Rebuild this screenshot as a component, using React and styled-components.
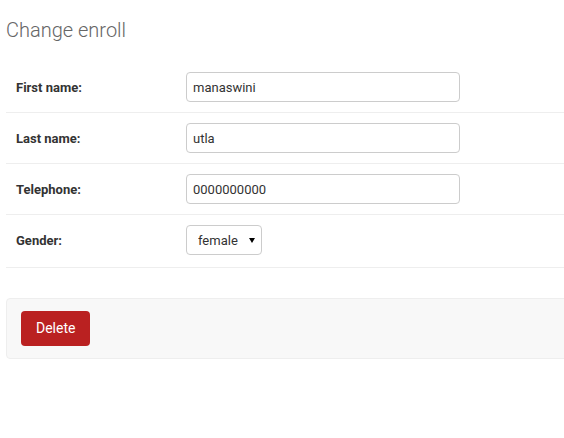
import styled, { createGlobalStyle } from 'styled-components';

const GlobalStyle = createGlobalStyle`
  html, body {
    margin: 0;
    padding: 0;
    background: #fff;
    overflow: hidden;
  }
  body {
    font-family: Roboto, "Liberation Sans", sans-serif;
    color: #333;
  }
`

const Content = styled.div`
  width: 640px;
  padding: 18px 0 0 6px;
`

const Title = styled.h1`
  margin: 0 0 20px;
  font-size: 20px;
  line-height: 24px;
  font-weight: 300;
  color: #666;
`

const FormRow = styled.div`
  display: flex;
  align-items: center;
  padding: ${props => props.$last ? '10px 10px 12px' : '10px'};
  border-bottom: 1px solid #eee;
  font-size: 13px;
`

const Label = styled.label`
  width: 160px;
  padding-right: 10px;
  font-weight: 700;
  font-size: 13px;
  color: #333;
`

const TextInput = styled.input`
  box-sizing: border-box;
  width: 274px;
  height: 30px;
  padding: 5px 6px;
  border: 1px solid #ccc;
  border-radius: 4px;
  font-family: Roboto, "Liberation Sans", sans-serif;
  font-size: 13px;
  color: #333;
  outline: none;
`

const SelectWrap = styled.div`
  position: relative;
  display: inline-block;

  /* native-looking dropdown arrow */
  &::after {
    content: '';
    position: absolute;
    left: 63px;
    top: 13px;
    border-left: 3px solid transparent;
    border-right: 3px solid transparent;
    border-top: 5px solid #000;
    pointer-events: none;
  }
`

const Select = styled.select`
  box-sizing: border-box;
  appearance: none;
  width: 76px;
  height: 30px;
  padding: 0 20px 0 11px;
  border: 1px solid #ccc;
  border-radius: 4px;
  background: #fff;
  font-family: Roboto, "Liberation Sans", sans-serif;
  font-size: 13px;
  color: #333;
`

const SubmitRow = styled.div`
  margin-top: 30px;
  padding: 12px 14px;
  background: #f8f8f8;
  border: 1px solid #eee;
  border-radius: 4px;
`

const DeleteLink = styled.a`
  display: inline-block;
  height: 15px;
  line-height: 15px;
  padding: 10px 15px;
  background: #ba2121;
  border-radius: 4px;
  color: #fff;
  font-size: 14px;
  text-decoration: none;
`

const fields = [
  { label: 'First name:', value: 'manaswini' },
  { label: 'Last name:', value: 'utla' },
  { label: 'Telephone:', value: '0000000000' },
]

export default function App() {
  return (
    <Content>
      <GlobalStyle />
      <Title>Change enroll</Title>
      <form>
        {fields.map(f => (
          <FormRow key={f.label}>
            <Label>{f.label}</Label>
            <TextInput type="text" defaultValue={f.value} />
          </FormRow>
        ))}
        <FormRow $last>
          <Label>Gender:</Label>
          <SelectWrap>
            <Select defaultValue="female">
              <option value="male">male</option>
              <option value="female">female</option>
            </Select>
          </SelectWrap>
        </FormRow>
        <SubmitRow>
          <DeleteLink href="#">Delete</DeleteLink>
        </SubmitRow>
      </form>
    </Content>
  )
}
